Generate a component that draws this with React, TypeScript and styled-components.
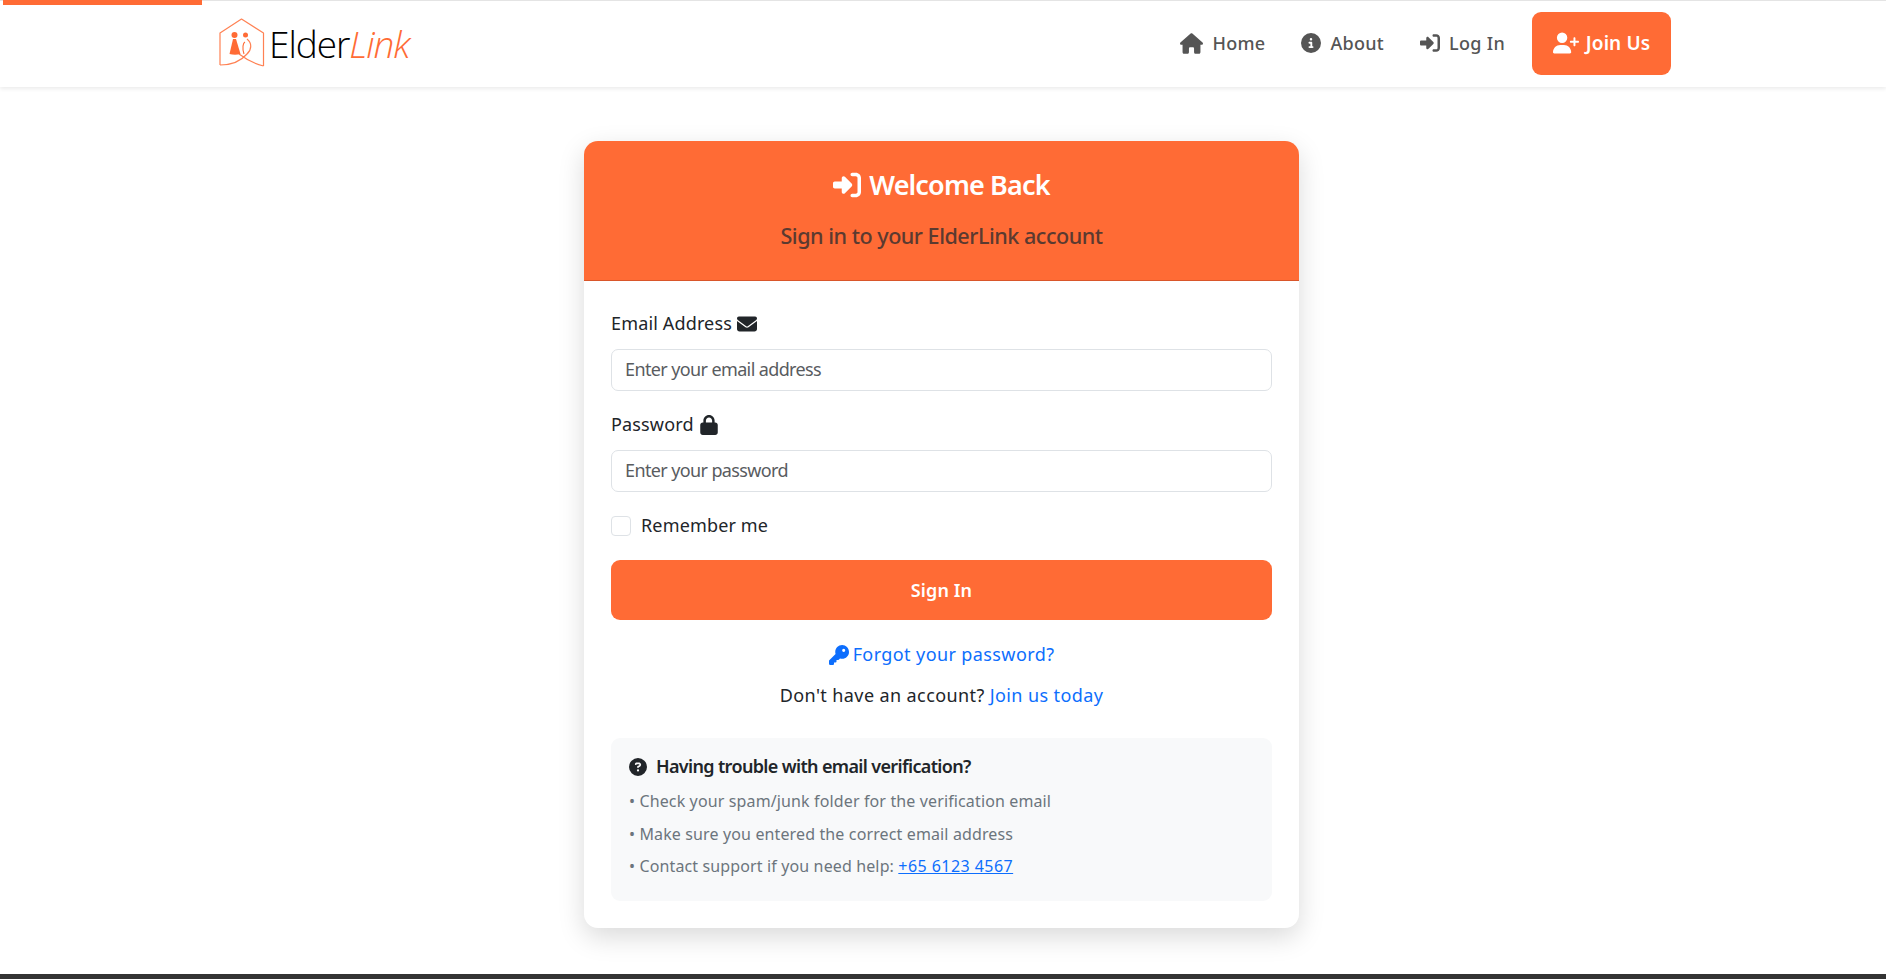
import React from 'react';
import styled, { createGlobalStyle } from 'styled-components';
import {
  FaCircleInfo,
  FaCircleQuestion,
  FaEnvelope,
  FaHouse,
  FaKey,
  FaLock,
  FaRightToBracket,
  FaUserPlus,
} from 'react-icons/fa6';

const orange = '#ff6b35';

const GlobalStyle = createGlobalStyle`
  html, body {
    margin: 0;
    height: 100%;
    background: #fff;
  }
  body {
    font-family: "Noto Sans", "Open Sans", sans-serif;
    font-size: 18px;
    line-height: 1.5;
    color: #212529;
    overflow: hidden;
  }
  * { box-sizing: border-box; }
`;

const Page = styled.div`
  position: relative;
  display: flex;
  flex-direction: column;
  height: 979px;
  overflow: hidden;
`;

const ProgressBar = styled.div`
  position: absolute;
  top: 0;
  left: 3px;
  width: 199px;
  height: 5px;
  background: ${orange};
`;

const Navbar = styled.header`
  display: flex;
  align-items: center;
  justify-content: space-between;
  height: 87px;
  padding: 0 215px 2px 219px;
  background: #fff;
  border-top: 1px solid #e4e4e4;
  box-shadow: 0 2px 4px rgba(0, 0, 0, 0.08);
`;

const Brand = styled.a`
  display: flex;
  align-items: center;
  gap: 4px;
`;

const BrandText = styled.span`
  font-family: "Open Sans", sans-serif;
  font-weight: 300;
  font-size: 37px;
  line-height: 1;
  letter-spacing: -1.05px;
  color: #000;
`;

const BrandAccent = styled.em`
  color: ${orange};
`;

const NavLinks = styled.nav`
  display: flex;
  align-items: center;
  gap: 18px;
`;

const NavLink = styled.a`
  display: flex;
  align-items: center;
  gap: 9px;
  padding: 0 9px;
  font-size: 18px;
  font-weight: 500;
  letter-spacing: 0.3px;
  color: #555;
`;

const JoinButton = styled.a`
  display: flex;
  align-items: center;
  justify-content: center;
  gap: 7px;
  width: 139px;
  height: 63px;
  border-radius: 9px;
  background: ${orange};
  color: #fff;
  font-size: 19px;
  font-weight: 600;
  letter-spacing: 0.1px;
`;

const Main = styled.main`
  flex: 1;
  display: flex;
  justify-content: center;
  padding: 54px 3px 0 0;
`;

const Card = styled.section`
  width: 715px;
  height: 787px;
  border-radius: 14px;
  background: #fff;
  box-shadow: 0 9px 27px rgba(0, 0, 0, 0.15);
`;

const CardHeader = styled.div`
  height: 140px;
  padding-top: 22px;
  text-align: center;
  background: ${orange};
  border-radius: 14px 14px 0 0;
  border-bottom: 1px solid #d9562a;
`;

const Title = styled.h1`
  display: flex;
  align-items: center;
  justify-content: center;
  gap: 8px;
  margin: 0;
  height: 44px;
  font-size: 27px;
  font-weight: 600;
  letter-spacing: -0.85px;
  color: #fff;
`;

const Subtitle = styled.p`
  margin: 13px 0 0;
  font-size: 21.6px;
  font-weight: 500;
  line-height: 1.5;
  letter-spacing: -0.5px;
  color: #5b3a30;
`;

const CardBody = styled.div`
  padding: 30px 27px 27px;
`;

const Field = styled.div`
  margin-bottom: 21px;
`;

const Label = styled.label`
  display: flex;
  align-items: center;
  gap: 5px;
  height: 27px;
  padding-bottom: 2px;
  margin-bottom: 11px;
  letter-spacing: 0.15px;
`;

const Input = styled.input`
  display: block;
  width: 100%;
  height: 42px;
  padding: 0 13px 2px;
  border: 1px solid #dee2e6;
  border-radius: 7px;
  background: #fff;
  font: inherit;
  letter-spacing: -0.62px;
  color: #212529;
  &::placeholder {
    color: #595c5f;
    opacity: 1;
  }
`;

const CheckRow = styled.label`
  display: flex;
  align-items: center;
  gap: 10px;
  height: 27px;
  padding-bottom: 2px;
  letter-spacing: 0.15px;
`;

const CheckBox = styled.input`
  appearance: none;
  width: 20px;
  height: 20px;
  margin: 0;
  border: 1px solid #dee2e6;
  border-radius: 4px;
  background: #fff;
`;

const SubmitButton = styled.button`
  display: block;
  width: 100%;
  height: 60px;
  margin-top: 20px;
  border: 0;
  border-radius: 9px;
  background: ${orange};
  color: #fff;
  font: inherit;
  font-weight: 600;
  letter-spacing: 0.1px;
`;

const CenterLine = styled.p<{ $gap: number }>`
  display: flex;
  align-items: center;
  justify-content: center;
  gap: 5px;
  height: 27px;
  margin: ${props => props.$gap}px 0 0;
  letter-spacing: 0.4px;
`;

const Link = styled.a`
  display: inline-flex;
  align-items: center;
  gap: 4px;
  color: #0d6efd;
`;

const HelpBox = styled.aside`
  height: 163px;
  margin-top: 29px;
  padding: 15px 18px;
  border-radius: 9px;
  background: #f8f9fa;
`;

const HelpHeading = styled.h2`
  display: flex;
  align-items: center;
  gap: 9px;
  margin: 0 0 5px;
  height: 27px;
  font-size: 18px;
  font-weight: 600;
  letter-spacing: -0.65px;
`;

const HelpLine = styled.p`
  margin: 0;
  height: 32.5px;
  font-size: 16px;
  line-height: 32.5px;
  letter-spacing: 0.13px;
  color: #6c757d;
`;

const PhoneLink = styled.a`
  letter-spacing: 0.45px;
  color: #0d6efd;
  text-decoration: underline;
`;

const BottomBar = styled.footer`
  flex: none;
  height: 5px;
  background: #343434;
`;

const LogoMark = () => (
  <svg width="46" height="50" viewBox="0 0 46 50" fill="none">
    <path
      d="M44.5 48 C36 46 28 42 20 36 M1 47 C12 47 22 43 28 36 C33 31 33 25 28 21 M1 47 V15 L22.5 1 L44.5 15 V48"
      stroke={orange}
      strokeWidth="1.2"
      strokeLinejoin="round"
      opacity="0.85"
    />
    <circle cx="15.5" cy="17" r="3" fill={orange} />
    <circle cx="26.5" cy="17" r="2.5" fill={orange} />
    <path d="M14 21 L17 21 L21.5 36 C18 37 14 37 10.5 36 Z" fill={orange} />
    <path d="M25 36 C23 30 24 25 26 24" stroke={orange} strokeWidth="1.1" />
  </svg>
);

export default function App() {
  return (
    <Page>
      <GlobalStyle />
      <ProgressBar />
      <Navbar>
        <Brand>
          <LogoMark />
          <BrandText>
            Elder<BrandAccent>Link</BrandAccent>
          </BrandText>
        </Brand>
        <NavLinks>
          <NavLink><FaHouse size={23} />Home</NavLink>
          <NavLink><FaCircleInfo size={20} />About</NavLink>
          <NavLink><FaRightToBracket size={20} />Log In</NavLink>
          <JoinButton><FaUserPlus size={26} />Join Us</JoinButton>
        </NavLinks>
      </Navbar>
      <Main>
        <Card>
          <CardHeader>
            <Title><FaRightToBracket size={28} />Welcome Back</Title>
            <Subtitle>Sign in to your ElderLink account</Subtitle>
          </CardHeader>
          <CardBody>
            <Field>
              <Label>Email Address <FaEnvelope size={20} /></Label>
              <Input placeholder="Enter your email address" />
            </Field>
            <Field>
              <Label>Password <FaLock size={20} /></Label>
              <Input placeholder="Enter your password" />
            </Field>
            <CheckRow>
              <CheckBox type="checkbox" />
              Remember me
            </CheckRow>
            <SubmitButton>Sign In</SubmitButton>
            <CenterLine $gap={21}>
              <Link><FaKey size={20} />Forgot your password?</Link>
            </CenterLine>
            <CenterLine $gap={14}>
              Don't have an account? <Link>Join us today</Link>
            </CenterLine>
            <HelpBox>
              <HelpHeading><FaCircleQuestion size={18} />Having trouble with email verification?</HelpHeading>
              <HelpLine>• Check your spam/junk folder for the verification email</HelpLine>
              <HelpLine>• Make sure you entered the correct email address</HelpLine>
              <HelpLine>• Contact support if you need help: <PhoneLink>+65 6123 4567</PhoneLink></HelpLine>
            </HelpBox>
          </CardBody>
        </Card>
      </Main>
      <BottomBar />
    </Page>
  );
}
